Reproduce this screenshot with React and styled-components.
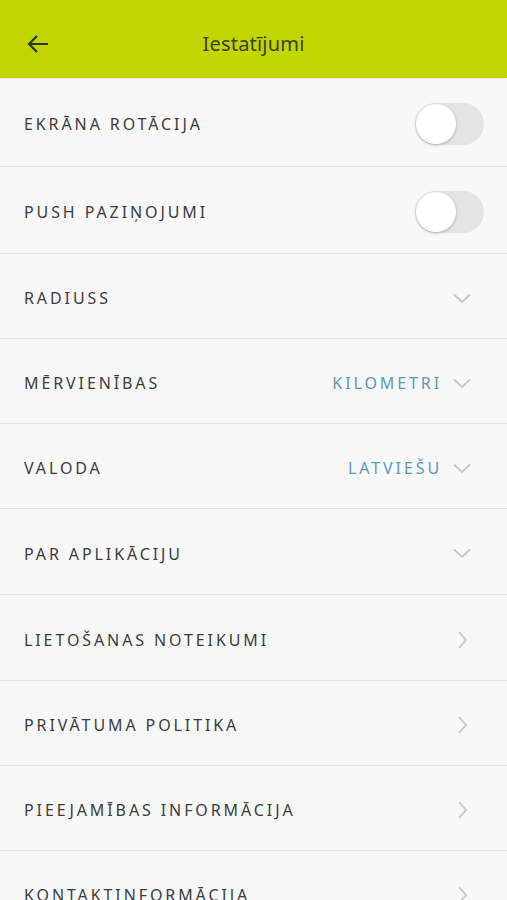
import React from "react";
import styled, { createGlobalStyle } from "styled-components";

const Global = createGlobalStyle`
  html, body { margin: 0; padding: 0; background: #f8f8f8; }
  body { font-family: "Noto Sans", "Open Sans", sans-serif; }
  * { box-sizing: border-box; }
`;

const Page = styled.div`
  width: 507px;
  min-height: 900px;
  background: #f8f8f8;
`;

const Header = styled.header`
  height: 78px;
  background: #c3d500;
  display: flex;
  align-items: center;
  padding-top: 9px;
  box-shadow: 0 1px 2px rgba(0,0,0,0.08);
`;

const BackButton = styled.button`
  width: 78px;
  height: 40px;
  border: 0;
  background: transparent;
  padding: 0 0 0 26px;
  display: flex;
  align-items: center;
  color: #2e3318;
  flex: none;
`;

const Title = styled.h1`
  flex: 1;
  margin: 0 78px 0 0;
  text-align: center;
  font-size: 20px;
  font-weight: 400;
  color: #3a401a;
  letter-spacing: 0.2px;
`;

const List = styled.div`
  display: flex;
  flex-direction: column;
`;

const Row = styled.div`
  height: ${(p) => p.$h}px;
  display: flex;
  align-items: center;
  padding: 4px 24px 0;
  border-bottom: 1px solid #e4e4e4;
`;

const Label = styled.span`
  flex: 1;
  font-size: 16px;
  letter-spacing: 2.9px;
  color: #3c3c3c;
  text-transform: uppercase;
  white-space: nowrap;
`;

const Value = styled.span`
  font-size: 16px;
  letter-spacing: 2.9px;
  color: #5a99c2;
  margin-right: 10px;
`;

const Toggle = styled.div`
  width: 69px;
  height: 42px;
  border-radius: 21px;
  background: #e4e4e4;
  position: relative;
  margin-right: -1px;
`;

const Knob = styled.div`
  position: absolute;
  left: 1px;
  top: 1px;
  width: 40px;
  height: 40px;
  border-radius: 50%;
  background: #fff;
  box-shadow: 0 1px 3px rgba(0,0,0,0.25);
`;

const IconBox = styled.span`
  width: 20px;
  display: flex;
  justify-content: center;
  color: #c6c6c6;
  margin-right: 11px;
`;

const ChevronDown = () => (
  <svg width="18" height="11" viewBox="0 0 18 11" fill="none">
    <path d="M1 1.5 L9 9 L17 1.5" stroke="currentColor" strokeWidth="1.8" />
  </svg>
);

const ChevronRight = () => (
  <svg width="11" height="18" viewBox="0 0 11 18" fill="none">
    <path d="M2 1 L9 9 L2 17" stroke="currentColor" strokeWidth="1.8" />
  </svg>
);

const items = [
  { label: "Ekrāna rotācija", type: "toggle", h: 89 },
  { label: "Push paziņojumi", type: "toggle", h: 87 },
  { label: "Radiuss", type: "down", h: 85 },
  { label: "Mērvienības", type: "down", value: "KILOMETRI", h: 85 },
  { label: "Valoda", type: "down", value: "LATVIEŠU", h: 85 },
  { label: "Par aplikāciju", type: "down", h: 86 },
  { label: "Lietošanas noteikumi", type: "right", h: 86 },
  { label: "Privātuma politika", type: "right", h: 85 },
  { label: "Pieejamības informācija", type: "right", h: 85 },
  { label: "Kontaktinformācija", type: "right", h: 85 },
];

export default function App() {
  return (
    <Page>
      <Global />
      <Header>
        <BackButton aria-label="Atpakaļ">
          <svg width="24" height="20" viewBox="0 0 24 20" fill="none">
            <path d="M22 10 H3 M11 2 L3 10 L11 18" stroke="currentColor" strokeWidth="2.2" />
          </svg>
        </BackButton>
        <Title>Iestatījumi</Title>
      </Header>
      <List>
        {items.map((it) => (
          <Row key={it.label} $h={it.h}>
            <Label>{it.label}</Label>
            {it.value && <Value>{it.value}</Value>}
            {it.type === "toggle" && (
              <Toggle>
                <Knob />
              </Toggle>
            )}
            {it.type === "down" && (
              <IconBox>
                <ChevronDown />
              </IconBox>
            )}
            {it.type === "right" && (
              <IconBox>
                <ChevronRight />
              </IconBox>
            )}
          </Row>
        ))}
      </List>
    </Page>
  );
}
